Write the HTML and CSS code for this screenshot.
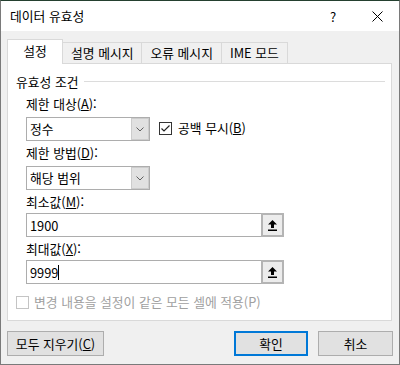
FILE: index.html
```html
<!DOCTYPE html>
<html lang="ko">
<head>
  <meta charset="UTF-8">
  <title>데이터 유효성</title>
  <link rel="stylesheet" href="styles.css">
</head>
<body>
  <div class="dialog">
    <div class="titlebar">
      <span class="title">데이터 유효성</span>
      <span class="caption-btn help">?</span>
      <span class="caption-btn">
        <svg width="11" height="11" viewBox="0 0 11 11"><path d="M0.5 0.5 L10.5 10.5 M10.5 0.5 L0.5 10.5" stroke="#000" fill="none"/></svg>
      </span>
    </div>

    <div class="dialog-body">
      <div class="tabs">
        <div class="tab active">설정</div>
        <div class="tab">설명 메시지</div>
        <div class="tab">오류 메시지</div>
        <div class="tab">IME 모드</div>
      </div>

      <div class="panel">
        <div class="group-title">유효성 조건</div>
        <div class="group">
          <div class="field-label">제한 대상(<u>A</u>):</div>
          <div class="row">
            <div class="select">
              <span class="select-value">정수</span>
              <span class="select-btn">
                <svg width="8" height="5" viewBox="0 0 8 5"><path d="M0.5 0.5 L4 4 L7.5 0.5" stroke="#606060" fill="none"/></svg>
              </span>
            </div>
            <label class="check check-inline">
              <span class="box">
                <svg width="11" height="11" viewBox="0 0 11 11"><path d="M1.5 5.5 L4 8 L9.5 2.5" stroke="#222" stroke-width="1.2" fill="none"/></svg>
              </span>
              <span>공백 무시(<u>B</u>)</span>
            </label>
          </div>

          <div class="field-label">제한 방법(<u>D</u>):</div>
          <div class="select">
            <span class="select-value">해당 범위</span>
            <span class="select-btn">
              <svg width="8" height="5" viewBox="0 0 8 5"><path d="M0.5 0.5 L4 4 L7.5 0.5" stroke="#606060" fill="none"/></svg>
            </span>
          </div>

          <div class="field-label">최소값(<u>M</u>):</div>
          <div class="input-row">
            <div class="input">1900</div>
            <span class="ref-btn">
              <svg width="9" height="11" viewBox="0 0 9 11"><path d="M4.5 0 L9 4.5 L6 4.5 L6 8 L3 8 L3 4.5 L0 4.5 Z" fill="#000"/><rect x="0" y="9.5" width="9" height="1.5" fill="#000"/></svg>
            </span>
          </div>

          <div class="field-label">최대값(<u>X</u>):</div>
          <div class="input-row">
            <div class="input">9999<span class="caret"></span></div>
            <span class="ref-btn">
              <svg width="9" height="11" viewBox="0 0 9 11"><path d="M4.5 0 L9 4.5 L6 4.5 L6 8 L3 8 L3 4.5 L0 4.5 Z" fill="#000"/><rect x="0" y="9.5" width="9" height="1.5" fill="#000"/></svg>
            </span>
          </div>
        </div>

        <label class="check disabled">
          <span class="box"></span>
          <span>변경 내용을 설정이 같은 모든 셀에 적용(P)</span>
        </label>
      </div>

      <div class="buttons">
        <button class="btn btn-clear">모두 지우기(<u>C</u>)</button>
        <button class="btn btn-ok">확인</button>
        <button class="btn btn-cancel">취소</button>
      </div>
    </div>
  </div>
</body>
</html>
```

FILE: styles.css
```css
body {
  margin: 0;
  font-family: "Noto Sans CJK KR", "Noto Sans", sans-serif;
  font-size: 12.8px;
  color: #000;
  background: #fff;
}
.dialog {
  width: 400px;
  height: 365px;
  box-sizing: border-box;
  border: 1px solid #7a7a7a;
  border-top-color: #24402f;
  background: #f0f0f0;
}
.titlebar {
  height: 30px;
  display: flex;
  align-items: center;
  background: #fff;
}
.title {
  flex: 1;
  padding-left: 9px;
  line-height: 30px;
}
.caption-btn {
  width: 44px;
  height: 30px;
  display: flex;
  align-items: center;
  justify-content: center;
}
.help {
  font-size: 13px;
}
.dialog-body {
  padding: 8px 6px 0;
}
.tabs {
  display: flex;
  align-items: flex-end;
  height: 24px;
}
.tab {
  height: 21px;
  line-height: 20px;
  padding: 0 8px;
  box-sizing: border-box;
  border: 1px solid #d9d9d9;
  border-left: none;
  border-bottom: none;
  background: #f0f0f0;
  white-space: nowrap;
}
.tab.active {
  position: relative;
  z-index: 1;
  width: 56px;
  height: 25px;
  margin-bottom: -1px;
  padding: 0;
  line-height: 22px;
  text-align: center;
  border-left: 1px solid #d9d9d9;
  background: #fff;
}
.panel {
  margin-right: 1px;
  padding: 7px 6px 10px 8px;
  border: 1px solid #d9d9d9;
  background: #fff;
}
.group-title {
  display: flex;
  align-items: center;
  height: 20px;
}
.group-title::after {
  content: "";
  flex: 1;
  height: 1px;
  margin-left: 6px;
  background: #dcdcdc;
}
.group {
  padding: 1px 0 0 10px;
}
.field-label {
  height: 16px;
  line-height: 16px;
  margin-top: 4px;
}
.row {
  display: flex;
  align-items: flex-start;
}
.select {
  display: flex;
  width: 124px;
  height: 24px;
  margin-top: 5px;
  box-sizing: border-box;
  border: 1px solid #adadad;
}
.select-value {
  flex: 1;
  padding-left: 3px;
  line-height: 22px;
}
.select-btn {
  display: flex;
  align-items: center;
  justify-content: center;
  width: 16px;
  border: 1px solid #cccccc;
  background: #e1e1e1;
}
.input-row {
  display: flex;
  margin-top: 3px;
}
.input {
  display: flex;
  align-items: center;
  width: 235px;
  height: 24px;
  box-sizing: border-box;
  padding-left: 3px;
  border: 1px solid #adadad;
  border-right: none;
}
.caret {
  width: 1px;
  height: 15px;
  background: #000;
}
.ref-btn {
  display: flex;
  align-items: center;
  justify-content: center;
  width: 23px;
  height: 24px;
  box-sizing: border-box;
  border: 2px solid #b4b4b4;
  background: #ececec;
}
.check {
  display: flex;
  align-items: center;
  gap: 5px;
  height: 16px;
  line-height: 16px;
  margin-top: 10px;
}
.check-inline {
  gap: 6px;
  margin: 8px 0 0 9px;
}
.box {
  display: flex;
  align-items: center;
  justify-content: center;
  width: 13px;
  height: 13px;
  box-sizing: border-box;
  border: 1px solid #333;
  background: #fff;
}
.check.disabled {
  color: #a0a0a0;
}
.check.disabled .box {
  border-color: #c4c4c4;
}
.buttons {
  display: flex;
  margin-top: 10px;
}
.btn {
  height: 25px;
  padding: 0;
  box-sizing: border-box;
  border: 1px solid #adadad;
  background: #e1e1e1;
  font: inherit;
  color: #000;
}
.btn-clear {
  width: 97px;
}
.btn-ok {
  width: 74px;
  margin-left: auto;
  border: 2px solid #0078d7;
}
.btn-cancel {
  width: 75px;
  margin-left: 10px;
}
```
